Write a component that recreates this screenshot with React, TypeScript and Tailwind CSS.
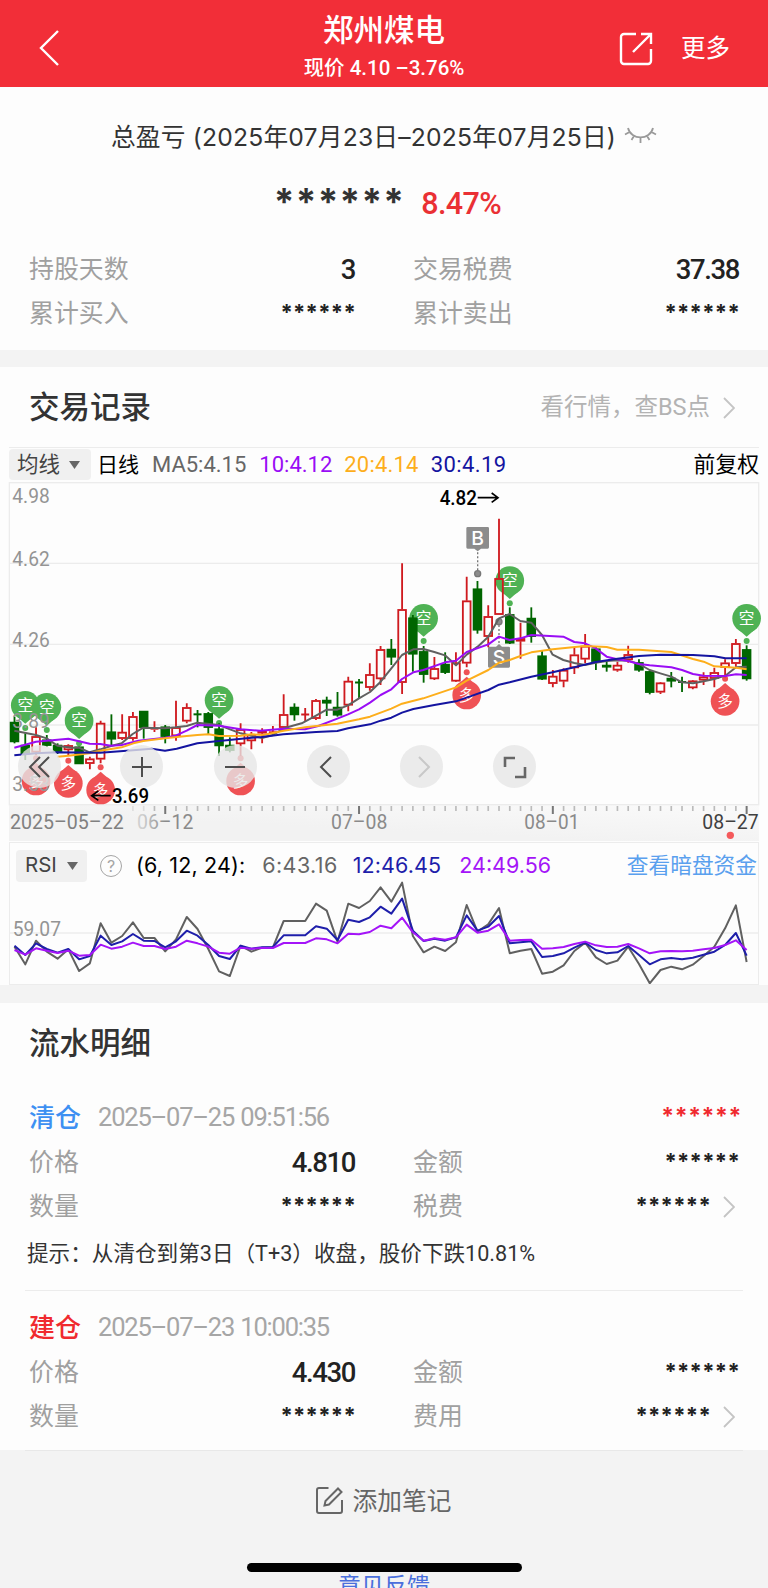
import type { ReactNode } from "react";
import { clsx } from "clsx";

const GREEN = "#006600";
const RED = "#cf1a1f";

// chart units: 3 per css pixel
const STEP = 32.3;
const px = (i: number) => 43.5 + STEP * i;

type Candle = [up: 0 | 1, high: number, top: number, bottom: number, low: number];

const CANDLES: Candle[] = [
  [0, 710, 726, 786, 790], [0, 760, 795, 822, 840], [1, 742, 769, 817, 825], [0, 765, 779, 797, 800],
  [0, 790, 795, 815, 822], [1, 793, 796, 810, 825], [0, 800, 800, 852, 852], [1, 830, 836, 851, 868],
  [1, 722, 729, 838, 850], [0, 703, 755, 778, 795], [1, 703, 756, 776, 780], [1, 696, 709, 776, 782],
  [0, 693, 693, 743, 776], [1, 724, 743, 749, 756], [0, 735, 740, 770, 790], [1, 662, 742, 768, 782],
  [1, 670, 682, 724, 730], [0, 690, 701, 705, 742], [0, 696, 700, 743, 762], [0, 730, 746, 798, 828],
  [0, 772, 795, 812, 817], [1, 730, 748, 792, 828], [1, 756, 763, 783, 808], [1, 745, 753, 760, 790],
  [1, 738, 755, 759, 765], [1, 643, 703, 743, 750], [0, 670, 681, 705, 722], [1, 684, 702, 705, 726],
  [1, 657, 661, 716, 720], [0, 650, 660, 670, 708], [0, 636, 681, 706, 710], [1, 590, 603, 676, 694],
  [0, 597, 605, 610, 656], [1, 550, 583, 623, 632], [1, 498, 508, 597, 615], [0, 477, 507, 532, 555],
  [1, 250, 388, 608, 642], [0, 405, 413, 523, 575], [0, 498, 514, 584, 608], [1, 531, 565, 597, 600],
  [0, 517, 552, 578, 582], [1, 517, 548, 604, 606], [1, 290, 362, 550, 562], [0, 303, 326, 451, 461],
  [1, 376, 409, 470, 502], [1, 116, 295, 404, 404], [0, 382, 403, 490, 492], [1, 428, 475, 484, 536],
  [0, 382, 414, 470, 488], [0, 512, 527, 598, 600], [1, 570, 588, 611, 622], [1, 565, 570, 604, 622],
  [1, 503, 524, 564, 582], [1, 462, 498, 538, 550], [0, 500, 506, 545, 570], [0, 543, 555, 562, 575],
  [1, 545, 555, 571, 575], [1, 497, 523, 540, 548], [0, 538, 547, 571, 575], [0, 570, 574, 638, 643],
  [1, 606, 608, 637, 642], [0, 576, 594, 604, 622], [0, 590, 604, 608, 636], [1, 600, 602, 624, 628],
  [1, 577, 590, 601, 615], [1, 563, 577, 596, 622], [1, 538, 548, 563, 592], [1, 477, 490, 551, 560],
  [0, 496, 508, 597, 602],
];

const MA = [
  {
    color: "#606060",
    points:
      "43,752 108,765 140,775 172,797 215,803 237,803 269,817 301,808 333,798 365,790 398,762 430,743 495,745 527,742 560,738 592,728 657,735 690,748 722,760 754,767 786,774 819,765 851,745 905,730 948,707 980,689 1012,689 1044,676 1077,655 1110,636 1142,605 1174,565 1206,525 1240,508 1270,507 1303,516 1335,526 1368,556 1400,524 1433,500 1465,470 1497,415 1529,402 1561,423 1594,428 1626,465 1658,524 1690,540 1723,549 1755,555 1787,548 1820,543 1852,541 1884,542 1917,552 1949,570 1981,580 2014,590 2046,607 2079,610 2111,604 2143,597 2176,587 2208,562 2240,560",
  },
  {
    color: "#9a0df5",
    points:
      "43,803 108,785 205,776 269,791 301,792 333,797 365,795 415,782 495,773 527,767 560,752 592,735 657,737 722,748 780,752 851,746 915,748 955,738 1012,716 1044,703 1077,688 1110,668 1142,645 1174,628 1206,597 1240,577 1270,570 1335,547 1368,542 1400,516 1465,493 1497,470 1529,480 1561,475 1594,465 1690,470 1723,486 1755,490 1787,505 1820,530 1852,538 1884,543 1917,552 1949,556 2014,562 2046,570 2079,582 2111,587 2176,588 2208,583 2240,585",
  },
  {
    color: "#fdae1b",
    points:
      "172,830 205,827 269,820 301,812 365,802 400,790 430,783 495,775 560,768 592,765 625,763 657,768 722,767 755,763 790,765 851,752 915,742 1012,731 1077,718 1110,710 1174,686 1206,671 1270,655 1368,622 1400,602 1465,570 1497,548 1529,540 1561,528 1594,517 1658,508 1755,498 1820,501 1852,509 1917,509 2014,516 2079,537 2111,545 2143,559 2208,563 2240,568",
  },
  {
    color: "#1414a0",
    points:
      "43,826 108,820 172,817 301,818 380,812 455,806 495,812 530,806 592,790 657,783 755,773 786,771 850,763 948,756 1012,753 1044,745 1110,733 1142,722 1174,713 1206,698 1240,687 1303,675 1368,664 1400,653 1465,630 1497,614 1529,607 1594,590 1658,577 1723,562 1787,546 1852,536 1917,528 1981,524 2079,525 2143,529 2176,535 2240,535",
  },
];

const RSI = [
  {
    color: "#606060",
    values: [440, 493, 422, 455, 476, 448, 513, 490, 370, 428, 408, 367, 414, 414, 454, 418, 351, 387, 447, 514, 528, 437, 455, 443, 442, 363, 363, 363, 311, 332, 425, 311, 324, 303, 262, 305, 248, 408, 457, 440, 453, 427, 315, 395, 373, 324, 460, 452, 447, 521, 515, 496, 453, 428, 472, 492, 482, 440, 492, 550, 510, 500, 508, 494, 468, 440, 385, 316, 486],
  },
  {
    color: "#1e1eaa",
    values: [437, 465, 430, 447, 458, 447, 478, 468, 407, 435, 424, 402, 422, 423, 442, 424, 392, 407, 435, 468, 477, 437, 446, 442, 441, 406, 406, 406, 379, 386, 420, 359, 366, 352, 320, 341, 296, 392, 423, 416, 422, 412, 346, 392, 380, 348, 430, 427, 424, 471, 468, 460, 443, 428, 450, 460, 457, 438, 465, 493, 478, 474, 478, 473, 464, 455, 435, 399, 467],
  },
  {
    color: "#a414f8",
    values: [450, 464, 445, 452, 459, 452, 467, 465, 434, 446, 440, 428, 438, 438, 447, 440, 422, 430, 440, 458, 461, 443, 446, 444, 444, 429, 429, 429, 415, 418, 430, 401, 403, 396, 377, 385, 353, 397, 422, 415, 419, 412, 374, 398, 392, 373, 422, 420, 419, 446, 445, 441, 432, 425, 436, 441, 440, 432, 445, 460, 454, 453, 454, 452, 448, 444, 435, 421, 450],
  },
];

const PINS: { i: number; y: number; bull?: boolean }[] = [
  { i: 1, y: 676 },
  { i: 3, y: 682 },
  { i: 6, y: 722 },
  { i: 19, y: 661 },
  { i: 38, y: 415 },
  { i: 46, y: 302 },
  { i: 68, y: 415 },
  { i: 2, y: 903, bull: true },
  { i: 5, y: 910, bull: true },
  { i: 8, y: 930, bull: true },
  { i: 21, y: 903, bull: true },
  { i: 42, y: 645, bull: true },
  { i: 66, y: 664, bull: true },
];

const Y_LABELS: [string, number][] = [["4.98", 70], ["4.62", 258], ["4.26", 500], ["3.89", 743], ["3.53", 932]];

const X_LABELS = [
  { text: "2025–05–22", x: 30, w: 341, fill: "#808080" },
  { text: "06–12", x: 411, w: 169, fill: "url(#fade)" },
  { text: "07–08", x: 993, w: 169, fill: "#8a8a8a" },
  { text: "08–01", x: 1573, w: 165, fill: "#8a8a8a" },
  { text: "08–27", x: 2107, w: 169, fill: "#404040" },
];

function Pin({ i, y, bull }: { i: number; y: number; bull?: boolean }) {
  const d = bull ? -1 : 1;
  return (
    <g transform={`translate(${px(i)} ${y})`} fill={bull ? "#ef5255" : "#4fb254"}>
      <circle r="43" />
      <path d={`M-24 ${d * 34}L0 ${d * 55}L24 ${d * 34}Z`} />
      <circle cy={d * 68} r="9" />
      <text y="17" textAnchor="middle" fontSize="47" fill="#fff">
        {bull ? "多" : "空"}
      </text>
    </g>
  );
}

function KLineChart() {
  return (
    <svg className="block h-[362px] w-[768px] font-[Roboto,'Noto_Sans_CJK_SC',sans-serif]" viewBox="0 0 2304 1086">
      <defs>
        <linearGradient id="fade">
          <stop offset="0.1" stopColor="#cfcfcf" />
          <stop offset="0.5" stopColor="#8a8a8a" />
        </linearGradient>
        <linearGradient id="axis" x1="0" y1="1" x2="1" y2="0">
          <stop offset="0.4" stopColor="#f2f2f2" />
          <stop offset="1" stopColor="#fafafa" />
        </linearGradient>
      </defs>
      <rect x="27" y="975" width="2250" height="108" fill="url(#axis)" />
      <g stroke="#ececec" strokeWidth="4" fill="none">
        <rect x="28" y="8" width="2248" height="966" />
        <path d="M28 250H2276M28 493H2276M28 735H2276" />
      </g>
      {PINS.map((p) => (
        <Pin key={p.i} {...p} />
      ))}
      <g fill="#8c8c8c" stroke="#777" strokeWidth="4">
        <path d="M1433 205V270M1497 435V500" strokeDasharray="6 6" />
        <circle cx="1433" cy="281" r="9" />
        <circle cx="1497" cy="425" r="9" />
      </g>
      <g fill="#8c8c8c">
        <path d="M1403 141h60a4 4 0 0 1 4 4v57a4 4 0 0 1-4 4h-20l-10 8-10-8h-20a4 4 0 0 1-4-4v-57a4 4 0 0 1 4-4Z" />
        <path d="M1468 500h20l9-8 9 8h20a4 4 0 0 1 4 4v55a4 4 0 0 1-4 4h-58a4 4 0 0 1-4-4v-55a4 4 0 0 1 4-4Z" />
        <g className="font-[Inter,sans-serif]" fill="#fff" fontSize="58" fontWeight="500" textAnchor="middle">
          <text x="1433" y="194">B</text>
          <text x="1497" y="552">S</text>
        </g>
      </g>
      {CANDLES.map(([up, high, top, bottom, low], i) => {
        const x = px(i);
        const thin = bottom - top < 7;
        const color = up ? RED : GREEN;
        return (
          <g key={i} stroke={color} strokeWidth="5.5" fill="none">
            <path d={up ? `M${x} ${high}V${top}M${x} ${bottom}V${low}` : `M${x} ${high}V${low}`} />
            {thin ? (
              <path d={`M${x - 12} ${(top + bottom) / 2}h24`} strokeWidth="6" />
            ) : (
              <rect x={x - 11.5} y={top + 2} width="23" height={bottom - top - 4} fill={up ? "none" : color} />
            )}
          </g>
        );
      })}
      <g fill="none" strokeWidth="6" strokeLinejoin="round">
        {MA.map((m) => (
          <polyline key={m.color} points={m.points} stroke={m.color} />
        ))}
      </g>
      <g fill="#949494" fontSize="60">
        {Y_LABELS.map(([t, y]) => (
          <text key={t} x="37" y={y} textLength="112" lengthAdjust="spacingAndGlyphs">
            {t}
          </text>
        ))}
      </g>
      <g fill="#000" fontSize="61" fontWeight="500">
        <text x="1319" y="74" textLength="112" lengthAdjust="spacingAndGlyphs">4.82</text>
        <text x="336" y="968" textLength="111" lengthAdjust="spacingAndGlyphs">3.69</text>
      </g>
      <path d="M1433 53H1493M1475 39L1494 53L1475 67M332 947H276M295 933L275 947L295 961" fill="none" stroke="#000" strokeWidth="5" />
      {CANDLES.map((_, i) => {
        if (i < 11) return null;
        const major = (i - 14) % 18 === 0;
        return (
          <path
            key={i}
            d={`M${px(i)} 978V${major ? 1002 : 993}`}
            stroke={major ? "#777" : i < 13 ? "#ddd" : "#bbb"}
            strokeWidth={major ? 6 : 5}
          />
        );
      })}
      <g fontSize="58">
        {X_LABELS.map((l) => (
          <text key={l.text} x={l.x} y="1047" fill={l.fill} textLength={l.w} lengthAdjust="spacingAndGlyphs">
            {l.text}
          </text>
        ))}
      </g>
      <circle cx="2191" cy="1066" r="11" fill="#f4595b" />
    </svg>
  );
}

function RsiChart() {
  return (
    <svg className="block h-[103px] w-full font-[Roboto,sans-serif]" viewBox="30 243 2244 309">
      <path d="M30 399H2274" stroke="#ececec" strokeWidth="4" />
      <text x="38" y="408" fontSize="60" fill="#949494" textLength="145" lengthAdjust="spacingAndGlyphs">
        59.07
      </text>
      <g fill="none" strokeWidth="6" strokeLinejoin="round">
        {RSI.map((r) => (
          <polyline key={r.color} stroke={r.color} points={r.values.map((v, i) => `${px(i)},${v}`).join(" ")} />
        ))}
      </g>
    </svg>
  );
}

function RoundButton({ children, className }: { children: ReactNode; className?: string }) {
  return (
    <button className={clsx("flex size-[43px] items-center justify-center rounded-full bg-[#e6e6e6]/80", className)}>
      <svg className="size-6 fill-none stroke-[#4d4d4d] stroke-2" viewBox="0 0 24 24">
        {children}
      </svg>
    </button>
  );
}

function Arrow() {
  return (
    <svg className="ml-[13px] mr-1 h-[22px] w-3 shrink-0 fill-none stroke-[#c4c4c4] stroke-[1.8]" viewBox="0 0 12 22">
      <path d="M1 1L11 11L1 21" />
    </svg>
  );
}

const HIDDEN = "******";

function Field({ label, value, arrow }: { label: string; value?: string; arrow?: boolean }) {
  return (
    <div className="flex h-11 items-center justify-between">
      <span className="text-[24.9px] text-[#a0a0a0]">{label}</span>
      <span className="flex items-center">
        {value ? (
          <span className="text-[27.5px] font-medium tracking-[-1.4px] text-[#222]">{value}</span>
        ) : (
          <Stars className="-mr-px -mt-1 text-[22px] tracking-[0.3px] text-[#222]" />
        )}
        {arrow && <Arrow />}
      </span>
    </div>
  );
}

function Stars({ className }: { className: string }) {
  return <span className={clsx("font-[Inter,sans-serif] font-bold leading-none", className)}>{HIDDEN}</span>;
}

interface RecordProps {
  kind: string;
  time: string;
  price: string;
  fee: string;
  sell?: boolean;
}

function TradeRecord({ kind, time, price, fee, sell }: RecordProps) {
  return (
    <>
      <div className="flex h-[45px] items-center pb-0.5 pl-[29px] pr-[26px]">
        <span className={clsx("text-[26px] font-medium", sell ? "text-[#3d90f2]" : "text-[#f02a2f]")}>{kind}</span>
        <span className="ml-[17px] flex-1 text-[25.5px] tracking-[-1.2px] [word-spacing:1px] text-[#a6a6a6]">{time}</span>
        {sell && <Stars className="-mt-0.5 text-[23px] tracking-[0.6px] text-[#f02a2f]" />}
      </div>
      <div className="grid grid-cols-[326px_326px] gap-x-[58px] pl-[29px]">
        <Field label="价格" value={price} />
        <Field label="金额" />
        <Field label="数量" />
        <Field label={fee} arrow />
      </div>
    </>
  );
}

export default function App() {
  return (
    <div className="flex h-[1588px] w-[768px] flex-col overflow-hidden bg-[#fdfdfd] font-[Roboto,'Noto_Sans_CJK_SC',sans-serif] leading-none text-[#333]">
      <header className="grid h-[87px] shrink-0 grid-cols-3 items-center bg-[#f22e38] text-white">
        <svg className="ml-[39px] mt-2 h-9 w-5 fill-none stroke-white stroke-[2.4]" viewBox="0 0 20 36">
          <path d="M19 1L2 18L19 35" />
        </svg>
        <div className="flex flex-col items-center pt-[6px]">
          <h1 className="text-[30.5px] font-medium leading-[36px]">郑州煤电</h1>
          <p className="mt-[7px] whitespace-nowrap text-[20.5px] leading-[24px] font-medium">现价 4.10 –3.76%</p>
        </div>
        <div className="mr-[38px] mt-2.5 flex items-center justify-end gap-[28px]">
          <svg className="size-[34px] fill-none stroke-white stroke-[2.4]" viewBox="0 0 34 34">
            <path d="M17 2H5a3 3 0 0 0-3 3V29a3 3 0 0 0 3 3H29a3 3 0 0 0 3-3V17M22 2H32V12M32 2L14 20" />
          </svg>
          <span className="pt-0.5 text-[24.5px]">更多</span>
        </div>
      </header>

      <section className="h-[263px] shrink-0 pt-[35px]">
        <div className="flex h-[30px] items-center justify-center">
          <span className="whitespace-nowrap font-[Inter,'Noto_Sans_CJK_SC',sans-serif] text-[24.7px] tracking-[0.2px]">
            总盈亏 (2025年07月23日–2025年07月25日)
          </span>
          <svg className="mb-1 ml-2 h-[17px] w-[33px] shrink-0 fill-none stroke-[#9a9a9a] stroke-[1.8]" viewBox="0 0 33 17">
            <path d="M4 1C7 13.500 26 13.500 29 1M5.500 5L1 7.500M10 9L7.500 13M16.500 10.500V16M23 9L25.500 13M27.500 5L32 7.500" />
          </svg>
        </div>
        <div className="mt-[35px] flex h-[32px] items-center justify-center pl-[7px]">
          <Stars className="-mt-1 text-[37px] tracking-[1.2px] text-[#333]" />
          <span className="ml-[16px] pt-0.5 text-[30.5px] font-medium tracking-[-0.6px] text-[#ea3034]">8.47%</span>
        </div>
        <div className="mt-[29px] grid grid-cols-[326px_326px] gap-x-[58px] pl-[29px]">
          <Field label="持股天数" value="3" />
          <Field label="交易税费" value="37.38" />
          <Field label="累计买入" />
          <Field label="累计卖出" />
        </div>
      </section>

      <div className="h-[17px] shrink-0 bg-[#f3f3f3]" />

      <section className="shrink-0">
        <div className="flex h-20 items-center justify-between pl-[29px] pr-[29px] pt-0.5">
          <h2 className="text-[30.5px] font-medium">交易记录</h2>
          <span className="flex items-center text-[23.5px] text-[#b3b3b3]">
            看行情，查BS点
            <Arrow />
          </span>
        </div>
        <div className="mx-[9px] flex h-[33px] items-center border-t-[1.5px] border-[#ececec] text-[22px] text-[#666]">
          <span className="flex h-[31px] w-[82px] items-center gap-[9px] rounded-sm bg-[#f0f0f0] pl-2 pt-0.5 text-[21.5px] text-[#444]">
            均线
            <svg className="h-2 w-[11px] fill-[#666]" viewBox="0 0 11 8">
              <path d="M0 0H11L5.500 8Z" />
            </svg>
          </span>
          <span className="ml-[6px] pt-0.5 text-[21px] text-black">日线</span>
          <span className="ml-[13px] pt-0.5">MA5:4.15</span>
          <span className="ml-[13px] pt-0.5 text-[#9a0df5]">10:4.12</span>
          <span className="ml-[12px] pt-0.5 tracking-[0.2px] text-[#fdae1b]">20:4.14</span>
          <span className="ml-[12px] pt-0.5 tracking-[0.4px] text-[#1414a0]">30:4.19</span>
          <span className="ml-auto pt-0.5 text-[21.8px] text-black">前复权</span>
        </div>
        <div className="relative">
          <KLineChart />
          <div className="absolute left-[18px] top-[265px] flex gap-[50.300px]">
            <RoundButton className="mr-[9px]">
              <path d="M12 2L2 12L12 22M21 2L11 12L21 22" />
            </RoundButton>
            <RoundButton>
              <path d="M12 2V22M2 12H22" />
            </RoundButton>
            <RoundButton>
              <path d="M2 12H22" />
            </RoundButton>
            <RoundButton>
              <path d="M15 2L5 12L15 22" />
            </RoundButton>
            <RoundButton>
              <path className="stroke-[#c8c8c8]" d="M9 2L19 12L9 22" />
            </RoundButton>
            <RoundButton>
              <path className="stroke-[#666] stroke-[2.6]" d="M2 12V3H12M22 12V22H12" />
            </RoundButton>
          </div>
        </div>
        <div className="mx-[9px] h-[143px] border border-[#ececec]">
          <div className="flex h-[38px] items-center pt-[7px] font-[Inter,'Noto_Sans_CJK_SC',sans-serif] text-[21.5px]">
            <span className="ml-[6px] flex h-[32px] w-[71px] items-center gap-[10px] rounded-sm bg-[#f0f0f0] pl-[9px] text-[20.5px] text-[#444]">
              RSI
              <svg className="h-2 w-[11px] fill-[#666]" viewBox="0 0 11 8">
                <path d="M0 0H11L5.500 8Z" />
              </svg>
            </span>
            <span className="ml-[13px] flex size-[22px] items-center justify-center rounded-full border-[1.500px] border-[#a5a5a5] text-[16px] text-[#a5a5a5]">
              ?
            </span>
            <span className="ml-[14px] tracking-[0.150px] text-black">(6, 12, 24):</span>
            <span className="ml-[17px] tracking-[0.400px] text-[#666]">6:43.16</span>
            <span className="ml-[15px] tracking-[0.100px] text-[#1e1eaa]">12:46.45</span>
            <span className="ml-[18px] text-[#a414f8]">24:49.56</span>
            <span className="ml-auto mr-px text-[21.7px] text-[#5aa0ee]">查看暗盘资金</span>
          </div>
          <RsiChart />
        </div>
      </section>

      <div className="h-[18px] shrink-0 bg-[#f3f3f3]" />

      <section className="h-[447px] shrink-0">
        <h2 className="flex h-[80px] items-center pl-[29px] pt-0.5 text-[30.5px] font-medium">流水明细</h2>
        <div className="mt-[13px]">
          <TradeRecord kind="清仓" time="2025–07–25 09:51:56" price="4.810" fee="税费" sell />
        </div>
        <p className="mb-[11px] flex h-[50px] items-center pl-[27px] text-[21.6px]">
          提示：从清仓到第3日（T+3）收盘，股价下跌10.81%
        </p>
        <div className="mx-[25px] border-t-[1.5px] border-[#ececec] pb-[15px]" />
        <TradeRecord kind="建仓" time="2025–07–23 10:00:35" price="4.430" fee="费用" />
      </section>

      <footer className="relative flex-1 bg-[#f3f3f3]">
        <div className="mx-[25px] border-t-[1.5px] border-[#e8e8e8]" />
        <div className="mt-[36px] flex h-[30px] items-center justify-center gap-[9px] pr-0.5 text-[24.7px] text-[#666]">
          <svg className="mb-1 size-[29px] fill-none stroke-[#666] stroke-2" viewBox="0 0 29 29">
            <path d="M13.500 2H4a2 2 0 0 0-2 2V25a2 2 0 0 0 2 2H25a2 2 0 0 0 2-2V14" />
            <path d="M23 2.500L26.500 6L14 18.500L9.500 19.500L10.500 15Z" />
          </svg>
          添加笔记
        </div>
        <p className="mt-[58px] text-center text-[23px] text-[#4a6fdc]">意见反馈</p>
        <div className="absolute left-[247px] top-[113px] h-[9px] w-[275px] rounded-full bg-black" />
      </footer>
    </div>
  );
}
